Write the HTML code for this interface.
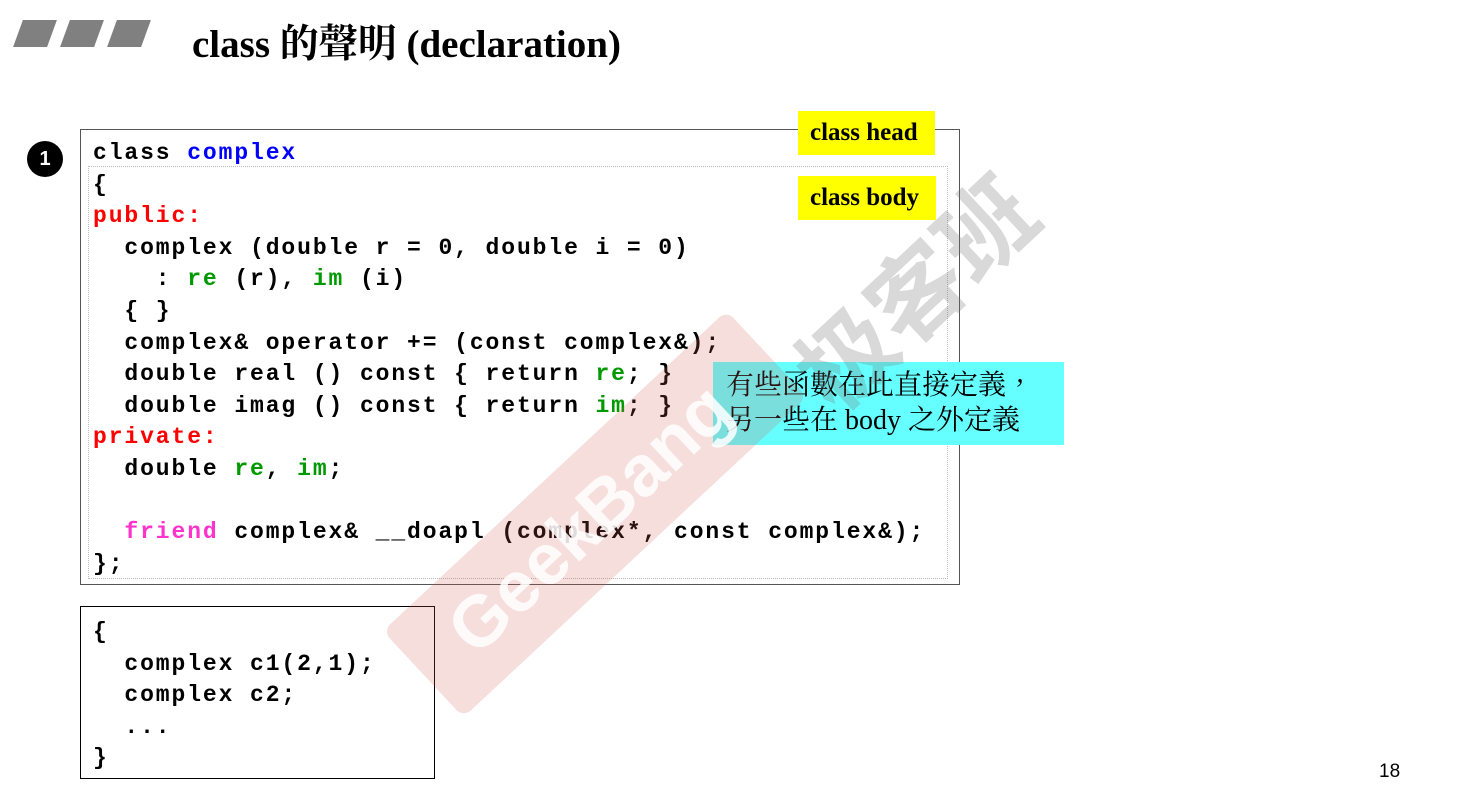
<!DOCTYPE html>
<html><head><meta charset="utf-8"><style>
body{margin:0;width:1469px;height:811px;background:#fff;position:relative;overflow:hidden;font-family:"Liberation Sans",sans-serif}
.abs{position:absolute}
.para{position:absolute;top:20px;width:34px;height:27px;background:#808080;transform:skewX(-20deg)}
pre{margin:0;font-family:"Liberation Mono",monospace;font-weight:bold;font-size:23px;letter-spacing:1.9px;line-height:31.6px;color:#000}
.b{color:#0000ff}.r{color:#ff0000}.g{color:#009900}.m{color:#ff33cc}
</style></head><body>
<div class="para" style="left:18px"></div>
<div class="para" style="left:65px"></div>
<div class="para" style="left:112px"></div>
<div class="abs" style="left:192px;top:13px;font-family:'Liberation Serif','Noto Serif CJK SC',serif;font-weight:bold;font-size:39px;">class 的聲明 (declaration)</div>

<div class="abs" style="left:27px;top:141px;width:36px;height:36px;border-radius:50%;background:#000;color:#fff;font-weight:bold;font-size:20px;text-align:center;line-height:36px">1</div>

<div class="abs" style="left:80px;top:129px;width:878px;height:454px;border:1px solid #555"></div>
<div class="abs" style="left:88px;top:166px;width:858px;height:411px;border:1px dotted #bbb"></div>
<pre class="abs" style="left:93px;top:138px">class <span class="b">complex</span>
{
<span class="r">public:</span>
  complex (double r = 0, double i = 0)
    : <span class="g">re</span> (r), <span class="g">im</span> (i)
  { }
  complex&amp; operator += (const complex&amp;);
  double real () const { return <span class="g">re</span>; }
  double imag () const { return <span class="g">im</span>; }
<span class="r">private:</span>
  double <span class="g">re</span>, <span class="g">im</span>;

  <span class="m">friend</span> complex&amp; __doapl (complex*, const complex&amp;);
};</pre>

<div class="abs" style="left:80px;top:606px;width:353px;height:171px;border:1px solid #000"></div>
<pre class="abs" style="left:93px;top:617px">{
  complex c1(2,1);
  complex c2;
  ...
}</pre>

<div class="abs" style="left:798px;top:111px;width:137px;height:44px;background:#ffff00;font-family:'Liberation Serif',serif;font-weight:bold;font-size:25px;line-height:44px;text-indent:12px;white-space:nowrap">class head</div>
<div class="abs" style="left:798px;top:176px;width:138px;height:44px;background:#ffff00;font-family:'Liberation Serif',serif;font-weight:bold;font-size:25px;line-height:44px;text-indent:12px;white-space:nowrap">class body</div>

<div class="abs" style="left:713px;top:362px;width:351px;height:83px;background:#66ffff;font-family:'Liberation Serif','Noto Serif CJK TC',serif;font-size:28px;line-height:35px;padding:6px 0 0 13px;box-sizing:border-box;white-space:nowrap">有些函數在此直接定義，<br>另一些在 body 之外定義</div>

<div class="abs" style="left:360px;top:455px;width:470px;height:118px;background:rgba(205,90,80,0.2);border-radius:10px;transform:rotate(-43deg);color:rgba(255,255,255,0.85);font-weight:bold;font-size:72px;line-height:118px;text-align:left;text-indent:50px">GeekBang</div>
<div class="abs" style="left:770px;top:220px;font-family:'Noto Sans CJK SC',sans-serif;font-weight:bold;font-size:95px;color:rgba(120,120,120,0.28);transform:rotate(-43deg);white-space:nowrap">极客班</div>

<div class="abs" style="left:1379px;top:761px;font-size:19px">18</div>
</body></html>
